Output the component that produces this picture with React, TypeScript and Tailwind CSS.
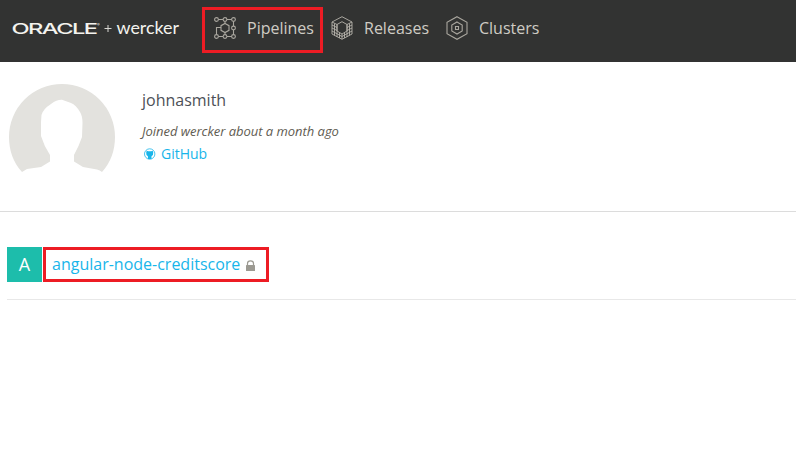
import React from "react";

function PipelinesIcon() {
  const nodes = [
    [3.5, 3.5], [12, 3.5], [20.5, 3.5], [20.5, 12], [3.5, 20.5], [12, 20.5], [20.5, 20.5],
  ];
  return (
    <svg className="h-6 w-6 shrink-0" viewBox="0 0 24 24" fill="none" stroke="#aaa79f" strokeWidth="1.1">
      {nodes.map(([x, y]) => (
        <circle key={`${x}-${y}`} cx={x} cy={y} r="1.9" />
      ))}
      <path d="M5.500 3.500H10M14 3.500H18.500M5.500 20.500H10M14 20.500H18.500M20.500 5.500V10M20.500 14V18.500M3.500 18.500V11.500H8M12 5.500V7.500M12 16.500V18.500" />
      <path d="M12 7.500L16 9.700V14.300L12 16.500L8 14.300V9.700Z" />
    </svg>
  );
}

function ReleasesIcon() {
  return (
    <svg className="h-6 w-6 shrink-0" viewBox="0 0 24 24" fill="none" stroke="#b5b2aa" strokeWidth=".9">
      <path d="M12 .7L22 6V18L12 23.300L2 18V6Z" />
      <path d="M4.500 7.500V19.500M7 8.500V21M19.500 7.500V19.500M17 8.500V21M9.500 17V22M14.500 17V22M12 18V23" />
      <path d="M7 8.500L12 5.700L17 8.500V15L12 18L7 15Z" />
      <path d="M2 6L7 8.500M2 9L7 11.500M2 12L7 14.500M2 15L12 20.500L22 15M17 14.500L22 12M22 6L17 8.500M22 9L17 11.500" />
    </svg>
  );
}

function ClustersIcon() {
  return (
    <svg className="h-6 w-6 shrink-0" viewBox="0 0 24 24" fill="none" stroke="#aaa79f" strokeWidth="1.1">
      <path d="M12 .7L22 6.300V17.700L12 23.300L2 17.700V6.300Z" />
      <path d="M12 6L17.200 9V15L12 18L6.800 15V9Z" />
      <path d="M10.500 10.500H13.500V13.500H10.500Z" />
    </svg>
  );
}

function Brand() {
  return (
    <svg className="h-8 w-[202px] shrink-0" viewBox="0 0 202 32" fill="#f4f3ee">
      <text x="11.500" y="21.500" fontFamily="Inter, sans-serif" fontSize="15" fontWeight="500" letterSpacing="-1" textLength="85" lengthAdjust="spacingAndGlyphs">ORACLE</text>
      <text x="97" y="14" fontFamily="Inter, sans-serif" fontSize="4">®</text>
      <path d="M104.500 16.500H111.500M108 13V20" stroke="#d8d7d2" strokeWidth="1" />
      <text x="116.500" y="21.500" fontFamily="Lato, sans-serif" fontSize="17.500" textLength="62.500" lengthAdjust="spacingAndGlyphs">wercker</text>
    </svg>
  );
}

function Avatar() {
  return (
    <svg className="h-[106px] w-[106px] shrink-0" viewBox="0 0 106 106">
      <path
        fill="#e3e2de"
        d="M13 88C4 78 0 66 0 53A53 53 0 0 1 106 53C106 66 102 78 93 88Q91 86 88 85.500L74 83L65 77.500V71Q70 62 73 53L73.500 39Q73.500 32 71 28Q67 21 62 19L53 15.800Q48 15.500 42 20Q34 25 32.500 31L32 38V52Q35 62 41 71V77.500L32 83L18 85Z"
      />
    </svg>
  );
}

export default function App() {
  return (
    <div className="h-[452px] w-[796px] overflow-hidden bg-white font-['Open_Sans',sans-serif] text-base">
      <header className="flex h-[62px] bg-[#323332] text-[#cfccc4]">
        <div className="flex h-14 items-center">
          <Brand />
        </div>
        <nav className="flex pt-[7px]">
          <a className="flex h-[46px] w-[121px] items-center gap-[10px] border-[3px] border-[#ed1c24] pb-1 pl-2">
            <PipelinesIcon />
            <span>Pipelines</span>
          </a>
          <a className="ml-[7px] flex h-[42px] w-[115px] items-center gap-[10px]">
            <ReleasesIcon />
            <span>Releases</span>
          </a>
          <a className="flex h-[42px] items-center gap-[10px]">
            <ClustersIcon />
            <span>Clusters</span>
          </a>
        </nav>
      </header>

      <section className="flex h-[150px] gap-[27px] border-b border-[#dcdcdc] pt-[22px] pl-[9px]">
        <Avatar />
        <div className="flex flex-col pt-1">
          <h1 className="leading-6 text-[#4d5057]">johnasmith</h1>
          <p className="mt-[11px] text-[13px] leading-4 tracking-[-0.03px] text-[#5f5c52] italic">Joined wercker about a month ago</p>
          <a className="mt-[5px] flex items-center gap-[5px] pl-[2px] text-sm leading-5 text-[#18b5ea]">
            <svg className="h-3 w-3" viewBox="0 0 12 12">
              <circle cx="5.700" cy="6" r="5.200" fill="none" stroke="currentColor" strokeWidth=".8" />
              <path fill="currentColor" d="M2.700 2.800L4.200 3.300H7.200L8.700 2.800L9.200 4.500Q9.500 7.500 7.500 8.300V11H3.900V8.300Q1.900 7.500 2.200 4.500Z" />
            </svg>
            GitHub
          </a>
        </div>
      </section>

      <main className="pt-[35px] pl-[7px]">
        <div className="flex h-[53px] gap-px border-b border-[#e8e8e8]">
          <div className="flex h-[35px] w-[35px] items-center justify-center bg-[#1dbdab] pb-[2px] text-lg text-white">A</div>
          <a className="flex h-[35px] w-[226px] items-center gap-[6px] border-[3px] border-[#ed1c24] pb-[2px] pl-[6px] text-[#18b5ea]">
            <span>angular-node-creditscore</span>
            <svg className="mt-[4px] h-[11px] w-[9px]" viewBox="0 0 9 11">
              <path d="M1.500 5.500V3.500Q1.500 .8 4.500 .8T7.500 3.500V5.500" fill="none" stroke="#9c9a92" strokeWidth="1.200" />
              <rect y="5" width="9" height="6" rx=".5" fill="#9c9a92" />
            </svg>
          </a>
        </div>
      </main>
    </div>
  );
}
